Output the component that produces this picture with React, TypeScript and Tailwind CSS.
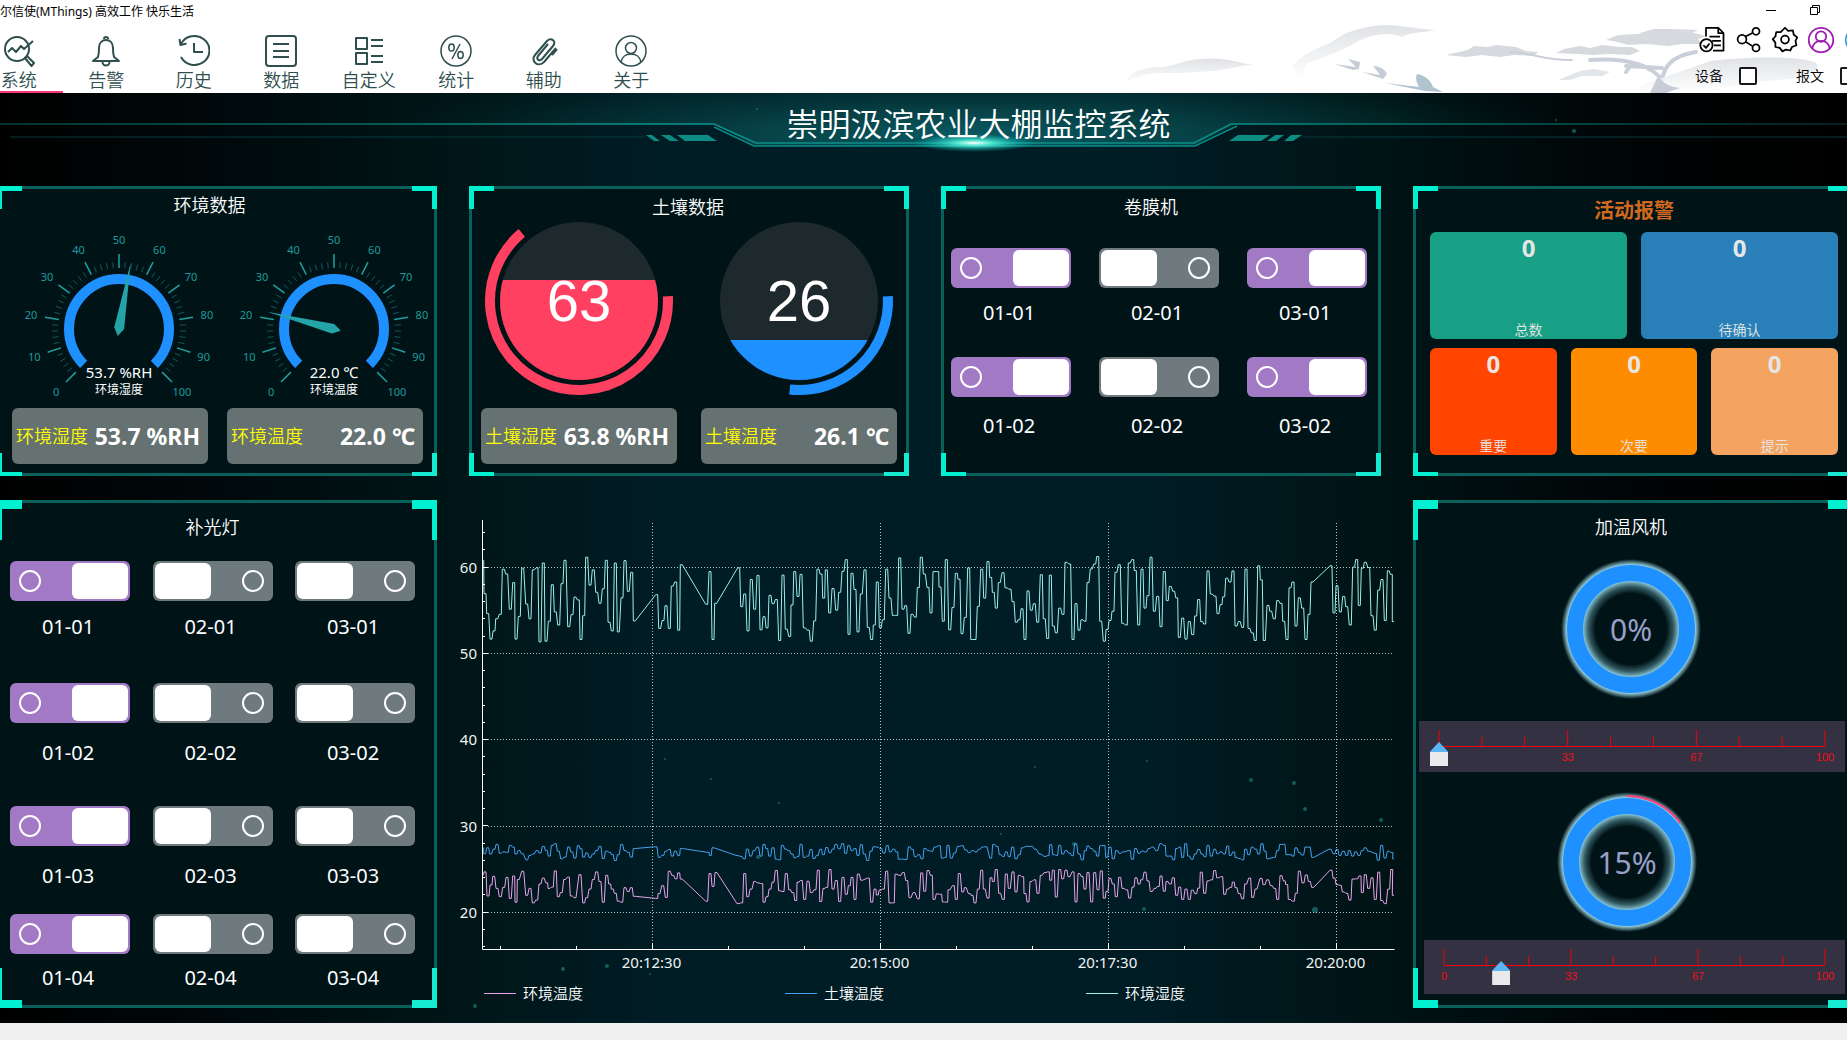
import { useState, type ReactNode } from 'react';

const NAV_ITEMS: { label: string; icon: ReactNode }[] = [
  {
    label: '系统',
    icon: (
      <>
        <circle cx="14" cy="14" r="12" />
        <path d="M5 17l4-4 4 4 5-6 3 3 9-8" />
        <path d="M22 23l2-2 7 7-2.500 3z" />
      </>
    ),
  },
  {
    label: '告警',
    icon: (
      <>
        <path d="M14 4a2 2 0 0 1 4 0" />
        <path d="M8 22c1-3 1-6 1-9 0-5 3-8 7-8s7 3 7 8c0 3 0 6 1 9l5 4H3z" />
        <path d="M12.500 27a3.500 3.500 0 0 0 7 0" />
      </>
    ),
  },
  {
    label: '历史',
    icon: (
      <>
        <path d="M3 9A15 14.500 0 1 1 3 22" />
        <path d="M1.500 4l1 6 6-1.500M16 8v9h9" />
      </>
    ),
  },
  {
    label: '数据',
    icon: (
      <>
        <rect x="1" y="1" width="30" height="30" rx="3" />
        <path d="M8 9h16M8 16h16M8 22h16" />
      </>
    ),
  },
  {
    label: '自定义',
    icon: (
      <>
        <path d="M3 3h11v11H3zM3 18h11v11H3z" />
        <path d="M18 5h12M18 11h12M18 21h12M18 27h12" />
      </>
    ),
  },
  {
    label: '统计',
    icon: (
      <g strokeWidth="1.500">
        <circle cx="16" cy="16" r="15" />
        <ellipse cx="11.500" cy="12.500" rx="2.700" ry="3.500" />
        <ellipse cx="20.500" cy="20" rx="2.700" ry="3.500" />
        <path d="M20 9l-8 15" />
      </g>
    ),
  },
  {
    label: '辅助',
    icon: (
      <path d="M28 13L16 27c-6 6-14-1-9-7L19 6c4-4 10 0 6 5L14 24c-3 3-6 0-4-3L20 9M24 20l5-6" />
    ),
  },
  {
    label: '关于',
    icon: (
      <g strokeWidth="1.500">
        <circle cx="16" cy="16" r="15" />
        <circle cx="16" cy="13" r="5.500" />
        <path d="M6 27c1-5 5-8 10-8s9 3 10 8" />
      </g>
    ),
  },
];

const TOOL_ICONS: { label: string; color: string; icon: ReactNode }[] = [
  {
    label: '报告',
    color: 'text-black',
    icon: (
      <>
        <path d="M8 12V2h14l6 6v20H16" />
        <path d="M22 2v6h6M12 12h12M15 17h10M17 22h8" />
        <circle cx="8.500" cy="22" r="7" />
        <path d="M5 22l3 3 4-5" />
      </>
    ),
  },
  {
    label: '分享',
    color: 'text-black',
    icon: (
      <>
        <circle cx="8" cy="15" r="5" />
        <circle cx="24" cy="6" r="4" />
        <circle cx="24" cy="25" r="4" />
        <path d="M12 12l8-4M12 18l8 5" />
      </>
    ),
  },
  {
    label: '设置',
    color: 'text-black',
    icon: (
      <>
        <path d="M16 2l3.500 3.500L25 5l1 5 4 3-2 4 1 5-5 2-2 4-5-1-4 2-3-4-5-1 0-5-3-4 3-3 1-5 5 0z" />
        <circle cx="16" cy="15.500" r="4.500" />
      </>
    ),
  },
  {
    label: '用户',
    color: 'text-[#a018b4]',
    icon: (
      <>
        <circle cx="16" cy="16" r="14" />
        <circle cx="16" cy="12" r="6" />
        <path d="M6 26c1-6 5-9 10-9s9 3 10 9" />
      </>
    ),
  },
  {
    label: '帮助',
    color: 'text-[#2a9fe0]',
    icon: (
      <>
        <circle cx="16" cy="16" r="13" />
        <circle cx="16" cy="16" r="5" />
      </>
    ),
  },
];

const Icon = ({
  children,
  className,
}: {
  children: ReactNode;
  className: string;
}) => (
  <svg
    aria-hidden="true"
    className={className}
    fill="none"
    stroke="currentColor"
    strokeLinejoin="round"
    strokeWidth="2"
    viewBox="0 0 32 32"
  >
    {children}
  </svg>
);

const InkLandscape = () => (
  <svg
    aria-hidden="true"
    className="absolute right-0 top-0 h-[93px] w-[747px]"
    viewBox="1100 0 747 93"
  >
    <defs>
      <linearGradient id="mist" x1="0" x2="0" y1="0" y2="1">
        <stop offset="0" stopColor="#d8dbdf" />
        <stop offset="1" stopColor="#ffffff" />
      </linearGradient>
    </defs>
    <path
      d="M1124 84c4-12 18-15 32-17 14 2 26-8 48-8 20-2 34 4 50 6-18 0-28 6-44 6-20 2-30 2-44 2-16 0-28 2-42 11z"
      fill="url(#mist)"
      opacity="0.8"
    />
    <path
      d="M1292 66c12-14 28-18 40-24 12-10 30-16 54-17 22 1 30 4 50 5-16 3-26 2-34 7-14-6-30-2-44 4-12 8-34 16-50 22-6 4-6 14 4 18-10-2-18-6-20-15z"
      fill="url(#mist)"
      opacity="0.8"
    />
    <g fill="#c6ccd6">
      <path d="M1334 64l22 3-8-8 12 3-1 7-6 1-19-6z" />
      <path d="M1362 72l18 3-7-9c6 0 12 3 14 8l-4 5-21-7z" />
      <path d="M1385 83l34 4c-2-4-4-8-2-13 7 1 14 6 16 13l10 5-18-1-40-8z" fill="#afc4ce" />
    </g>
    <g fill="#d6dadf">
      <path d="M1446 55l22-5 6-4 14 1 8-2 20 2 10 4 12 1-4 4-20-1-14 2-18-2-16 2z" />
      <path d="M1556 53l8-4 16-3 10 2 12-3 18 2 12 0 8 4-10 4-22-1-14 1-16-1z" />
      <path d="M1606 40l12-5 20-1 12-3 26 0 18 2 12 3-8 3 4 5-20 0-14 2-22-2-18 1-10-3z" />
      <path d="M1640 33l14-4 20 0 24 1-6 3-26 1z" />
      <path d="M1558 80l12-5 10-4 14-2 16 3-8 4-20 0-12 4z" opacity="0.7" />
    </g>
    <g fill="none" stroke="#cbcfda" strokeLinecap="round">
      <path d="M1510 52c20 0 36 9 62 8" strokeWidth="2" />
      <path d="M1590 60c34-2 60 4 72 20 2-12 8-24 34-28M1662 68l-36-2M1630 66l-4 6" strokeWidth="4" />
    </g>
    <path
      d="M1630 93c20-14 50-20 80-32 36-4 90-6 106 2 6 6-8 16-26 16-34 2-60 6-80 14z"
      fill="url(#mist)"
      opacity="0.8"
    />
    <path d="M1658 76c6 8 10 10 22 12l-14 5h-16z" fill="#c8ccd8" />
  </svg>
);

const TopBar = () => (
  <header className="relative flex h-[93px] justify-between overflow-hidden bg-white">
    <InkLandscape />
    <div className="relative">
      <p className="h-6 text-xs leading-6 text-black">
        尔信使(MThings) 高效工作 快乐生活
      </p>
      <nav className="-ml-[25px] grid w-[700px] grid-cols-8 text-[#2f4f4f]">
        {NAV_ITEMS.map((item, index) => (
          <a
            aria-current={index === 0 ? 'page' : undefined}
            className="flex h-[69px] flex-col items-center border-b-2 border-transparent pt-[11px] text-lg font-[350] leading-[26px] aria-[current]:border-[#ff3377]"
            href="#"
            key={item.label}
          >
            <Icon className="size-8 shrink-0">{item.icon}</Icon>
            {item.label}
          </a>
        ))}
      </nav>
    </div>
    <div className="relative -mr-7 w-[180px] shrink-0">
      <div className="flex h-5 pl-[54px]">
        <button aria-label="最小化" className="flex w-11 items-center justify-center" type="button">
          <span className="h-px w-2.5 bg-black" />
        </button>
        <button aria-label="还原" className="flex w-11 items-center justify-center" type="button">
          <svg className="size-3" fill="none" stroke="#000" viewBox="0 0 12 12">
            <path d="M1.500 3.500h7v7h-7zM3.500 3.500v-2h7v7h-2" />
          </svg>
        </button>
      </div>
      <div className="flex h-10">
        {TOOL_ICONS.map((tool) => (
          <button
            aria-label={tool.label}
            className={`flex w-9 items-center justify-center ${tool.color}`}
            key={tool.label}
            type="button"
          >
            <Icon className="size-7">{tool.icon}</Icon>
          </button>
        ))}
      </div>
      <div className="flex h-8 items-center gap-[39px] text-sm font-[350] text-black">
        {['设备', '报文'].map((label) => (
          <label className="flex shrink-0 items-center gap-4" key={label}>
            {label}
            <input
              className="size-[18px] appearance-none rounded-xs border-2 border-[#16181c] bg-white checked:bg-[#16181c]"
              type="checkbox"
            />
          </label>
        ))}
      </div>
    </div>
  </header>
);

const STARS = [
  [208, 178, 2], [222, 141, 1], [503, 168, 2], [757, 16, 1], [1556, 27, 1], [1574, 38, 2],
  [665, 666, 1], [711, 686, 1], [779, 710, 1], [758, 764, 2], [563, 876, 2], [607, 873, 2],
  [475, 913, 2], [650, 881, 1], [1251, 687, 2], [1294, 690, 2], [1305, 716, 2], [1381, 727, 2],
  [1315, 817, 3], [1074, 751, 2], [1144, 816, 2], [1001, 741, 1], [1035, 674, 1], [1147, 668, 1],
];

const Backdrop = () => (
  <svg
    aria-hidden="true"
    className="absolute left-0 top-0 w-full"
    fill="none"
    viewBox="0 0 1847 930"
  >
    <defs>
      <radialGradient id="hall" cx="974" cy="0" gradientTransform="matrix(1 0 0 0.120 0 44)" gradientUnits="userSpaceOnUse" r="620">
        <stop offset="0" stopColor="#0a5f68" stopOpacity="0.95" />
        <stop offset="0.350" stopColor="#084c50" stopOpacity="0.8" />
        <stop offset="0.700" stopColor="#043a3a" stopOpacity="0.4" />
        <stop offset="1" stopColor="#002222" stopOpacity="0" />
      </radialGradient>
      <radialGradient id="flare">
        <stop offset="0" stopColor="#fff" />
        <stop offset="0.300" stopColor="#52f0d8" stopOpacity="0.9" />
        <stop offset="1" stopColor="#0bb" stopOpacity="0" />
      </radialGradient>
      <linearGradient id="rail" x1="0" x2="1847" y1="0" y2="0" gradientUnits="userSpaceOnUse">
        <stop offset="0" stopColor="#064440" />
        <stop offset="0.350" stopColor="#0a9088" />
        <stop offset="0.650" stopColor="#0a9088" />
        <stop offset="1" stopColor="#022a28" />
      </linearGradient>
    </defs>
    <path d="M0 0h1847v32h-613l-41 21H756l-41-21H0z" fill="url(#hall)" />
    <path d="M0 31h714l42 19h438l37-19h616" stroke="url(#rail)" strokeWidth="1.500" />
    <path d="M714 34l40 19h441l42-20" stroke="#0a8a84" strokeWidth="1.500" />
    <path d="M10 44h635M1303 44h544" stroke="#073a3c" />
    <path
      d="M646 42h6l8 6h-6zM661 42h9l9 6h-9zM677 42h31l9 6h-32zM1238 42h32l-9 6h-32zM1275 42h9l-8 6h-9zM1291 42h11l-9 6h-9z"
      fill="#0d8c83"
    />
    <ellipse cx="974" cy="50" fill="url(#flare)" rx="62" ry="9" />
    {STARS.map(([x, y, r]) => (
      <circle cx={x} cy={y} fill="#1a7a75" fillOpacity="0.7" key={`${x}-${y}`} r={r} />
    ))}
  </svg>
);

const Panel = ({
  title,
  tall = false,
  className,
  titleClass,
  children,
}: {
  title: string;
  tall?: boolean;
  className: string;
  titleClass: string;
  children: ReactNode;
}) => {
  const size = tall ? 'h-10' : 'h-[23px]';
  const top = tall ? 'border-t-[9px]' : 'border-t-[5px]';
  const bottom = tall ? 'border-b-[8px]' : 'border-b-4';
  return (
    <section
      className={`relative border-[3px] border-[#08605a] bg-[#001418] ${className}`}
    >
      <i className={`absolute -left-[3px] -top-[3px] w-[25px] border-l-[5px] border-[#00f0d0] ${size} ${top}`} />
      <i className={`absolute -right-[3px] -top-[3px] w-[25px] border-r-[5px] border-[#00f0d0] ${size} ${top}`} />
      <i className={`absolute -bottom-[3px] -left-[3px] w-[25px] border-l-[5px] border-[#00f0d0] ${size} ${bottom}`} />
      <i className={`absolute -bottom-[3px] -right-[3px] w-[25px] border-r-[5px] border-[#16ead0] ${size} ${bottom}`} />
      <h2 className={`text-center leading-7 ${titleClass}`}>{title}</h2>
      {children}
    </section>
  );
};

const Reading = ({ label, value }: { label: string; value: string }) => (
  <div className="flex h-14 items-center justify-between whitespace-nowrap rounded-md bg-[#657271] pl-1 pr-2">
    <span className="text-lg font-[350] text-[#ff0]">{label}</span>
    <span className="text-[23px] font-bold">{value}</span>
  </div>
);

const polar = (radius: number, degrees: number) => {
  const rad = (degrees * Math.PI) / 180;
  return [radius * Math.cos(rad), radius * Math.sin(rad)];
};

const arc = (radius: number, from: number, to: number) => {
  const [x1, y1] = polar(radius, from);
  const [x2, y2] = polar(radius, to);
  return `M${x1} ${y1}A${radius} ${radius} 0 ${to - from > 180 ? 1 : 0} 1 ${x2} ${y2}`;
};

const Gauge = ({
  value,
  text,
  label,
}: {
  value: number;
  text: string;
  label: string;
}) => (
  <svg className="w-full" viewBox="-98 -100 196 175">
    <path d={arc(50, -225, 45)} fill="none" stroke="#1e90ff" strokeWidth="10" />
    {Array.from({ length: 51 }, (_, i) => {
      const angle = -225 + i * 5.4;
      const major = i % 5 === 0;
      const [x1, y1] = polar(61, angle);
      const [x2, y2] = polar(major ? 75 : 67, angle);
      const [lx, ly] = polar(89, angle);
      return (
        <g key={i}>
          <line
            stroke={major ? '#1fa0a0' : '#14585a'}
            strokeWidth={major ? 1.5 : 1}
            x1={x1}
            x2={x2}
            y1={y1}
            y2={y2}
          />
          {major ? (
            <text fill="#1f9a9c" fontSize="11" textAnchor="middle" x={lx} y={ly + 4}>
              {i * 2}
            </text>
          ) : null}
        </g>
      );
    })}
    <path
      d="M0 -67L5 -1L0 7L-5 -1z"
      fill="#24a3a8"
      transform={`rotate(${(value - 50) * 2.7})`}
    />
    <g fill="#fff" textAnchor="middle">
      <text fontSize="15" y="49">{text}</text>
      <text fontSize="12" y="65">{label}</text>
    </g>
  </svg>
);

const LiquidBall = ({
  value,
  level,
  sweep,
  color,
}: {
  value: number;
  level: number;
  sweep: number;
  color: string;
}) => (
  <svg className="w-full" viewBox="-98 -80 196 182">
    <clipPath id={`ball-${value}`}>
      <circle r="79" />
    </clipPath>
    <g clipPath={`url(#ball-${value})`}>
      <rect fill="#1e292d" height="160" width="160" x="-80" y="-80" />
      <rect fill={color} height="160" width="160" x="-80" y={level} />
    </g>
    <path d={arc(89, -3, sweep)} fill="none" stroke={color} strokeWidth="10" />
    <text
      className="font-['Liberation_Sans',Arial,sans-serif]"
      fill="#fff"
      fontSize="58"
      textAnchor="middle"
      y="20"
    >
      {value}
    </text>
  </svg>
);

const Switch = ({ label, on, gap }: { label: string; on: boolean; gap: string }) => {
  const [checked, setChecked] = useState(on);

  return (
    <label className={`flex w-[120px] flex-col text-xl leading-7 ${gap}`}>
      <input
        checked={checked}
        className="flex h-10 w-[120px] appearance-none items-center justify-between rounded-md bg-[#6f7a7e] px-0.5 before:h-9 before:w-14 before:rounded-md before:bg-white after:mx-[7px] after:size-[22px] after:rounded-full after:border-2 after:border-white checked:flex-row-reverse checked:bg-[#a279c5]"
        onChange={(event) => setChecked(event.target.checked)}
        role="switch"
        type="checkbox"
      />
      <span className="pr-1 text-center">{label}</span>
    </label>
  );
};

const SwitchRow = ({
  row,
  on,
  height,
  gap,
}: {
  row: string;
  on: boolean[];
  height: string;
  gap: string;
}) => (
  <div className={`flex justify-between ${height}`}>
    {on.map((state, i) => (
      <Switch gap={gap} key={i} label={`0${i + 1}-${row}`} on={state} />
    ))}
  </div>
);

const AlarmTile = ({
  label,
  className,
}: {
  label: string;
  className: string;
}) => (
  <div
    className={`flex h-[107px] flex-col items-center justify-between rounded-md text-[#e6e6e6] ${className}`}
  >
    <strong className="text-2xl leading-8">0</strong>
    <span className="text-sm font-[350] leading-[18px]">{label}</span>
  </div>
);

// Samples are packed "x,y" pairs on the recorder's grid: 3 units per plot
// pixel across and 2.904 down. The second half of a trace starts at x = 1410.
const unpack = (first: string, second: string) => {
  const read = (pairs: string, offset: number) =>
    pairs.split(' ').map((pair) => {
      const [x, y] = pair.split(',').map(Number);
      return [(x + offset) / 3, y / 2.904];
    });
  return [...read(first, 0), ...read(second, 1410)];
};

const tracePath = (points: number[][]) =>
  points
    .map(([x, y], i) => {
      const px = Math.max(x - 1, 22.5).toFixed(1);
      const py = y.toFixed(1);
      return `${i ? 'L' : 'M'}${px} ${py}H${Math.min(x + 1, 934).toFixed(1)}`;
    })
    .join('');

const TRACES = [
  {
    label: '环境温度',
    color: '#e8a4ea',
    points: unpack(
      '68,1088 75,1080 84,1150 93,1118 101,1093 111,1128 121,1152 131,1125 141,1096 151,1157 161,1092 168,1168 175,1102 188,1078 200,1148 210,1128 220,1170 230,1162 240,1115 250,1098 260,1112 267,1128 277,1124 286,1077 295,1152 304,1140 314,1102 325,1095 334,1150 345,1155 360,1088 371,1170 380,1155 390,1130 400,1102 410,1080 420,1108 430,1168 440,1090 449,1115 457,1130 466,1142 475,1165 485,1168 495,1126 505,1137 514,1126 523,1151 590,1157 597,1143 608,1120 619,1154 628,1078 638,1090 648,1100 656,1083 664,1101 740,1165 750,1085 759,1122 768,1082 834,1172 845,1170 854,1085 863,1152 873,1130 884,1108 894,1112 905,1114 912,1168 921,1152 930,1130 939,1110 949,1076 959,1135 969,1137 979,1085 989,1132 998,1140 1007,1163 1014,1110 1024,1105 1034,1160 1044,1107 1054,1140 1065,1132 1075,1075 1082,1166 1092,1128 1100,1125 1110,1073 1119,1130 1129,1105 1139,1166 1149,1096 1159,1145 1168,1120 1176,1096 1185,1160 1195,1086 1205,1104 1225,1098 1235,1168 1245,1130 1252,1147 1260,1133 1270,1130 1280,1078 1290,1170 1300,1170 1308,1087 1320,1090 1330,1082 1340,1105 1350,1155 1362,1140 1375,1158 1385,1083 1394,1136 1404,1076 1414,1090 1422,1160 1432,1144 1442,1145 1450,1167 1460,1168 1467,1132 1480,1120 1489,1160 1498,1085',
      '98,1138 106,1126 118,1143 126,1148 135,1170 145,1130 155,1075 163,1130 174,1156 183,1097 190,1108 199,1073 209,1142 220,1160 229,1086 238,1128 249,1080 258,1138 268,1090 278,1094 285,1143 294,1167 303,1108 314,1103 324,1142 334,1090 345,1082 355,1080 362,1104 370,1075 379,1153 389,1073 398,1100 408,1075 417,1094 429,1080 438,1167 447,1085 456,1093 465,1130 474,1082 485,1167 494,1082 504,1132 514,1077 523,1156 531,1137 540,1099 550,1115 559,1152 569,1096 579,1128 590,1132 599,1156 609,1124 618,1097 627,1115 635,1103 645,1081 654,1106 664,1137 675,1128 685,1122 693,1092 703,1136 711,1108 721,1115 730,1097 740,1148 749,1124 758,1160 768,1130 778,1160 787,1133 797,1143 806,1127 814,1081 824,1142 834,1106 845,1103 854,1076 863,1097 875,1094 884,1145 893,1130 902,1125 910,1110 918,1126 928,1143 938,1158 947,1115 959,1098 968,1154 978,1130 993,1099 1002,1117 1013,1103 1024,1120 1034,1128 1043,1160 1053,1091 1063,1106 1070,1117 1078,1160 1090,1165 1099,1142 1108,1078 1119,1112 1129,1089 1138,1108 1148,1125 1203,1075 1212,1098 1221,1117 1231,1119 1240,1138 1250,1142 1260,1162 1269,1101 1280,1100 1290,1092 1297,1140 1306,1088 1316,1128 1326,1097 1336,1160 1346,1081 1355,1163 1366,1172 1376,1130 1385,1073 1390,1148',
    ),
  },
  {
    label: '土壤温度',
    color: '#46a2ee',
    points: unpack(
      '68,1010 74,1027 83,1010 92,1028 102,1014 111,1000 121,1026 131,1022 142,1023 151,1003 160,1008 168,1028 177,1018 187,1027 200,1045 210,1032 220,1028 231,1018 240,1025 250,1006 259,1018 268,1034 277,1003 286,998 295,1020 305,1042 315,1037 326,1008 335,1022 345,1040 355,1004 363,1013 371,1037 380,1025 390,1038 400,1028 410,1018 420,1006 430,1041 439,1020 449,1023 457,1030 466,1047 475,1030 485,1000 495,1018 505,1023 514,1037 523,1012 588,1007 598,1038 608,1032 618,1020 628,1015 637,1034 646,1020 656,1032 664,1012 745,1023 751,1032 759,1010 834,1033 843,1035 853,1042 862,1014 872,1034 882,1018 893,1008 903,1034 912,1000 920,1012 929,1034 939,1010 949,1043 959,1045 967,1003 977,1014 986,1018 996,1028 1005,1039 1014,1035 1023,1000 1033,1038 1043,1034 1053,1015 1062,1041 1072,1032 1082,1014 1090,1030 1100,1009 1110,1024 1119,1014 1128,1000 1138,1013 1148,998 1157,1026 1166,1004 1176,1018 1185,1012 1194,1032 1204,1001 1213,1028 1223,1047 1233,1020 1242,1007 1252,1008 1262,1012 1272,1025 1282,1004 1291,1022 1301,1014 1310,1022 1318,1043 1328,1043 1338,1044 1348,1007 1357,1015 1366,1036 1376,1030 1386,1042 1395,1012 1405,1018 1415,1020 1425,1008 1438,1004 1447,1040 1456,1038 1464,1003 1474,1040 1484,1025 1495,1006',
      '97,1004 107,1016 118,1024 128,1018 138,1022 148,1014 158,1008 168,1007 182,1040 191,1000 201,1006 211,1030 220,1035 229,1022 238,1036 248,1008 258,1042 268,1030 277,1010 290,1006 305,1006 316,1014 330,1028 345,1035 354,1033 362,1001 371,1030 380,1032 389,1003 398,1028 408,1018 418,1025 427,1033 437,998 447,1028 457,1045 466,1018 474,1005 484,1012 494,1020 503,1034 512,1004 522,1003 530,1038 540,1008 550,1042 560,1018 570,1026 580,1022 598,1018 607,1043 617,1012 627,1026 637,1020 647,1022 657,1012 668,1008 680,1018 692,998 703,1003 711,1034 722,1034 731,1045 740,1012 749,1008 758,1038 767,998 776,1034 786,1043 796,1028 806,1015 816,1028 825,1036 834,1003 844,1034 854,1014 863,1027 873,1022 883,1028 893,1005 901,1032 911,1022 918,1038 928,1041 938,1045 947,1014 956,1030 967,1008 977,1014 986,1028 996,998 1005,1020 1013,1042 1033,1038 1043,1018 1052,1000 1062,1000 1071,1030 1082,1030 1089,1034 1098,1010 1108,1024 1118,1031 1128,1008 1138,1008 1148,1038 1200,1014 1212,1027 1221,1015 1230,1032 1240,1020 1250,1032 1258,1018 1268,1034 1277,1022 1287,1032 1297,1018 1306,1010 1316,1020 1336,1026 1345,1046 1355,1003 1365,1040 1375,1020 1386,1024 1391,1042',
    ),
  },
  {
    label: '环境湿度',
    color: '#9af0ec',
    points: unpack(
      '68,175 75,272 83,330 93,404 102,380 110,345 121,332 130,201 140,215 151,317 161,240 168,404 178,338 188,198 200,302 210,345 220,203 231,197 240,412 250,183 258,410 268,352 277,246 286,325 296,363 306,243 315,175 326,368 336,333 345,282 355,290 363,405 371,336 380,166 390,247 400,203 410,268 420,300 430,258 439,175 447,355 457,380 466,183 475,383 486,284 495,176 505,265 515,210 523,351 590,275 599,373 609,350 618,307 628,373 637,250 647,238 656,378 664,188 740,303 750,208 759,405 767,300 836,197 845,310 854,273 864,380 874,231 884,317 894,219 903,377 912,339 921,371 930,277 939,301 949,289 959,408 969,218 979,375 989,396 996,305 1004,208 1014,280 1023,216 1033,371 1045,378 1054,410 1064,351 1074,201 1083,215 1091,285 1099,203 1109,328 1119,257 1130,320 1139,268 1149,207 1159,173 1167,390 1176,213 1185,260 1194,383 1204,273 1215,203 1225,370 1235,405 1243,363 1252,238 1261,371 1270,348 1280,201 1290,285 1300,335 1310,335 1319,168 1329,317 1337,307 1347,387 1356,332 1366,340 1375,254 1384,166 1393,215 1404,254 1413,328 1422,208 1433,208 1440,253 1450,352 1459,173 1469,377 1479,312 1489,213 1497,230',
      '96,388 106,341 116,197 125,405 135,405 145,309 155,201 164,285 174,179 182,225 190,268 199,314 208,240 219,211 228,255 240,259 249,295 259,355 267,348 276,316 285,405 294,264 304,320 313,301 323,355 334,217 343,345 353,402 361,218 370,366 379,386 389,314 399,332 408,181 419,186 429,405 438,301 447,378 456,348 465,352 474,240 484,200 494,186 503,164 512,352 523,410 531,376 540,350 549,323 558,210 568,188 578,358 589,363 598,183 608,173 616,205 626,363 636,201 645,314 654,278 663,166 673,323 683,280 693,368 703,208 712,292 721,251 731,265 740,284 748,399 758,343 768,404 778,353 788,391 797,337 806,289 815,353 824,360 834,206 844,273 855,279 864,330 873,304 881,281 890,227 900,238 909,206 918,366 928,353 938,370 948,201 957,373 967,386 976,408 986,191 994,232 1003,408 1014,306 1022,323 1033,345 1043,292 1053,300 1061,352 1071,405 1080,255 1089,238 1098,366 1108,284 1118,314 1128,405 1137,332 1146,238 1203,191 1212,328 1221,249 1231,325 1241,280 1250,310 1261,363 1271,195 1280,173 1288,306 1297,198 1306,181 1316,196 1326,336 1336,378 1346,262 1356,231 1366,350 1375,206 1384,216 1390,353',
    ),
  },
];

const TIMES = ['20:12:30', '20:15:00', '20:17:30', '20:20:00'];

const TrendChart = () => (
  <div className="col-span-2 -ml-2.5 -mr-3.5 pt-2.5">
    <svg className="w-full" fill="none" viewBox="-1 10 936 465">
      <g stroke="#b8c4c4" strokeDasharray="1 2">
        {[67.5, 153.5, 239.5, 326.5, 412.5].map((y) => (
          <path d={`M28 ${y}H933`} key={y} />
        ))}
        {TIMES.map((time, i) => (
          <path d={`M${192.5 + i * 228} 23V448`} key={time} />
        ))}
      </g>
      {TRACES.map((trace) => (
        <path d={tracePath(trace.points)} key={trace.label} stroke={trace.color} />
      ))}
      <g stroke="#fff">
        <path d="M22.500 20V449.500H934.500" />
        {Array.from({ length: 25 }, (_, i) => {
          const y = Math.round(33 + i * 17.26) - 0.5;
          return <path d={`M22 ${y}h${i % 5 === 2 ? 6 : 3}`} key={i} />;
        })}
        {Array.from({ length: 12 }, (_, i) => (
          <path d={`M${40.5 + i * 76} 449v-${i % 3 === 2 ? 6 : 3}`} key={i} />
        ))}
      </g>
      <g fill="#f0f4f4" fontSize="15">
        {[60, 50, 40, 30, 20].map((value, i) => (
          <text key={value} textAnchor="end" x="17" y={73 + i * 86.2}>
            {value}
          </text>
        ))}
        {TIMES.map((time, i) => (
          <text key={time} textAnchor="middle" x={191.5 + i * 228} y="468">
            {time}
          </text>
        ))}
      </g>
    </svg>
    <ul className="grid grid-cols-3 pl-[25px] pr-2 pt-2 text-[15px] font-[350] leading-5">
      {TRACES.map((trace) => (
        <li className="flex items-center gap-[7px]" key={trace.label}>
          <span className="h-px w-8" style={{ backgroundColor: trace.color }} />
          {trace.label}
        </li>
      ))}
    </ul>
  </div>
);

const FanRing = ({ value }: { value: number }) => (
  <svg className="mx-auto size-[140px]" viewBox="-70 -70 140 140">
    <defs>
      <radialGradient cx="0" cy="0" gradientUnits="userSpaceOnUse" id={`halo-${value}`} r="70">
        <stop offset="0.510" stopColor="#7fd0e8" stopOpacity="0" />
        <stop offset="0.600" stopColor="#86c8d4" stopOpacity="0.350" />
        <stop offset="0.690" stopColor="#9be0f5" stopOpacity="0.9" />
        <stop offset="0.910" stopColor="#9be0f5" />
        <stop offset="0.950" stopColor="#9ccfd8" stopOpacity="0.6" />
        <stop offset="1" stopColor="#7fc0cc" stopOpacity="0" />
      </radialGradient>
    </defs>
    <circle fill={`url(#halo-${value})`} r="70" />
    <circle fill="none" r="56" stroke="#1e90ff" strokeWidth="16" />
    {value > 0 ? (
      <path
        d={arc(66, -90, -90 + value * 3.6)}
        fill="none"
        stroke="#ff3d7c"
        strokeWidth="2"
      />
    ) : null}
    <text fill="#9a9fc8" fontSize="30" textAnchor="middle" y="12">
      {value}%
    </text>
  </svg>
);

const RulerSlider = ({
  label,
  initial,
  className,
}: {
  label: string;
  initial: number;
  className: string;
}) => {
  const [value, setValue] = useState(initial);

  return (
    <div className={`relative bg-[#333142] px-5 ${className}`}>
      <svg className="h-[51px] w-full overflow-visible">
        <line stroke="#f00" x1="0" x2="100%" y1="25.500" y2="25.500" />
        {Array.from({ length: 10 }, (_, i) => {
          const x = `${(i * 100) / 9}%`;
          return (
            <line key={i} stroke="#f00008" x1={x} x2={x} y1={i % 3 ? 16 : 9} y2="25" />
          );
        })}
        {[0, 33, 67, 100].map((mark, i) => (
          <text
            className="font-['Liberation_Sans',Arial,sans-serif]"
            fill="#f01018"
            fontSize="11"
            key={mark}
            textAnchor="middle"
            x={`${(i * 100) / 3}%`}
            y="40"
          >
            {mark}
          </text>
        ))}
      </svg>
      <input
        aria-label={label}
        className="absolute inset-x-[11px] top-[21px] h-6 appearance-none bg-transparent [&::-webkit-slider-thumb]:h-6 [&::-webkit-slider-thumb]:w-[18px] [&::-webkit-slider-thumb]:appearance-none [&::-webkit-slider-thumb]:bg-[linear-gradient(#5cb4f5_0_10px,#e8eaec_10px)] [&::-webkit-slider-thumb]:[clip-path:polygon(50%_0,100%_40%,100%_100%,0_100%,0_40%)]"
        max={100}
        min={0}
        onChange={(event) => setValue(Number(event.target.value))}
        type="range"
        value={value}
      />
    </div>
  );
};

const App = () => (
  <div className="flex min-h-screen flex-col overflow-x-hidden bg-[#f0f0f0] font-['Noto_Sans','Noto_Sans_CJK_SC',sans-serif] text-white">
    <TopBar />
    <main className="relative overflow-hidden bg-[linear-gradient(90deg,#000_0%,#00090b_12%,#001517_24%,#001c25_36%,#001c25_62%,#001416_74%,#000304_90%,#000_100%)] pb-[15px]">
      <Backdrop />
      <h1 className="relative h-[93px] pl-[110px] pt-2 text-center text-[32px] font-[350] leading-[46px]">
        崇明汲滨农业大棚监控系统
      </h1>
      <div className="relative -ml-[3px] -mr-1.5 grid grid-cols-4 grid-rows-[290px_508px] gap-x-8 gap-y-6">
        <Panel
          className="pl-3 pr-[11px] pt-0.5"
          title="环境数据"
          titleClass="pr-4 text-lg font-[350]"
        >
          <div className="-mr-[9px] ml-[9px] grid grid-cols-2 gap-[19px] pt-2.5">
            <Gauge label="环境湿度" text="53.7 %RH" value={53.7} />
            <Gauge label="环境温度" text="22.0 ℃" value={22} />
          </div>
          <div className="grid grid-cols-2 gap-[19px] pt-1">
            <Reading label="环境湿度" value="53.7 %RH" />
            <Reading label="环境温度" value="22.0 ℃" />
          </div>
        </Panel>

        <Panel
          className="px-[9px] pt-1"
          title="土壤数据"
          titleClass="pr-0.5 text-lg font-[350]"
        >
          <div className="grid grid-cols-2 gap-6">
            <LiquidBall color="#ff4060" level={-21} sweep={230} value={63} />
            <LiquidBall color="#1e90ff" level={39} sweep={96} value={26} />
          </div>
          <div className="grid grid-cols-2 gap-6 pt-[5px]">
            <Reading label="土壤湿度" value="63.8 %RH" />
            <Reading label="土壤温度" value="26.1 ℃" />
          </div>
        </Panel>

        <Panel
          className="pl-[7px] pr-[11px] pt-1"
          title="卷膜机"
          titleClass="mb-[27px] pr-4 text-lg font-[350]"
        >
          <SwitchRow gap="gap-[11px]" height="h-[109px]" on={[true, false, true]} row="01" />
          <SwitchRow gap="gap-[15px]" height="h-[83px]" on={[true, false, true]} row="02" />
        </Panel>

        <Panel
          className="pl-3.5 pr-3 pt-2"
          title="活动报警"
          titleClass="mb-[7px] text-xl font-bold text-[#d2691e]"
        >
          <div className="grid grid-cols-2 gap-3.5">
            <AlarmTile className="bg-[#17a085]" label="总数" />
            <AlarmTile className="bg-[#2980b9]" label="待确认" />
          </div>
          <div className="grid grid-cols-3 gap-3.5 pt-[9px]">
            <AlarmTile className="bg-[#ff4500]" label="重要" />
            <AlarmTile className="bg-[#ff8c00]" label="次要" />
            <AlarmTile className="bg-[#f4a460]" label="提示" />
          </div>
        </Panel>

        <Panel
          className="pl-2.5 pr-[19px] pt-2.5"
          tall
          title="补光灯"
          titleClass="mb-5 text-lg font-[350]"
        >
          <SwitchRow gap="gap-3" height="h-[122px]" on={[true, false, false]} row="01" />
          <SwitchRow gap="gap-4" height="h-[123px]" on={[true, false, false]} row="02" />
          <SwitchRow gap="gap-4" height="h-[108px]" on={[true, false, false]} row="03" />
          <SwitchRow gap="gap-2.5" height="h-20" on={[true, false, false]} row="04" />
        </Panel>

        <TrendChart />

        <Panel
          className="pl-[3px] pr-[5px] pt-2.5"
          tall
          title="加温风机"
          titleClass="mb-[18px] pr-0.5 text-lg font-[350]"
        >
          <div className="pr-0.5">
            <FanRing value={0} />
          </div>
          <RulerSlider className="mt-[22px]" initial={0} label="加温风机 1" />
          <div className="pr-2.5 pt-5">
            <FanRing value={15} />
          </div>
          <RulerSlider className="ml-[5px] mt-2 pb-[3px]" initial={15} label="加温风机 2" />
        </Panel>
      </div>
    </main>
  </div>
);

export default App;
